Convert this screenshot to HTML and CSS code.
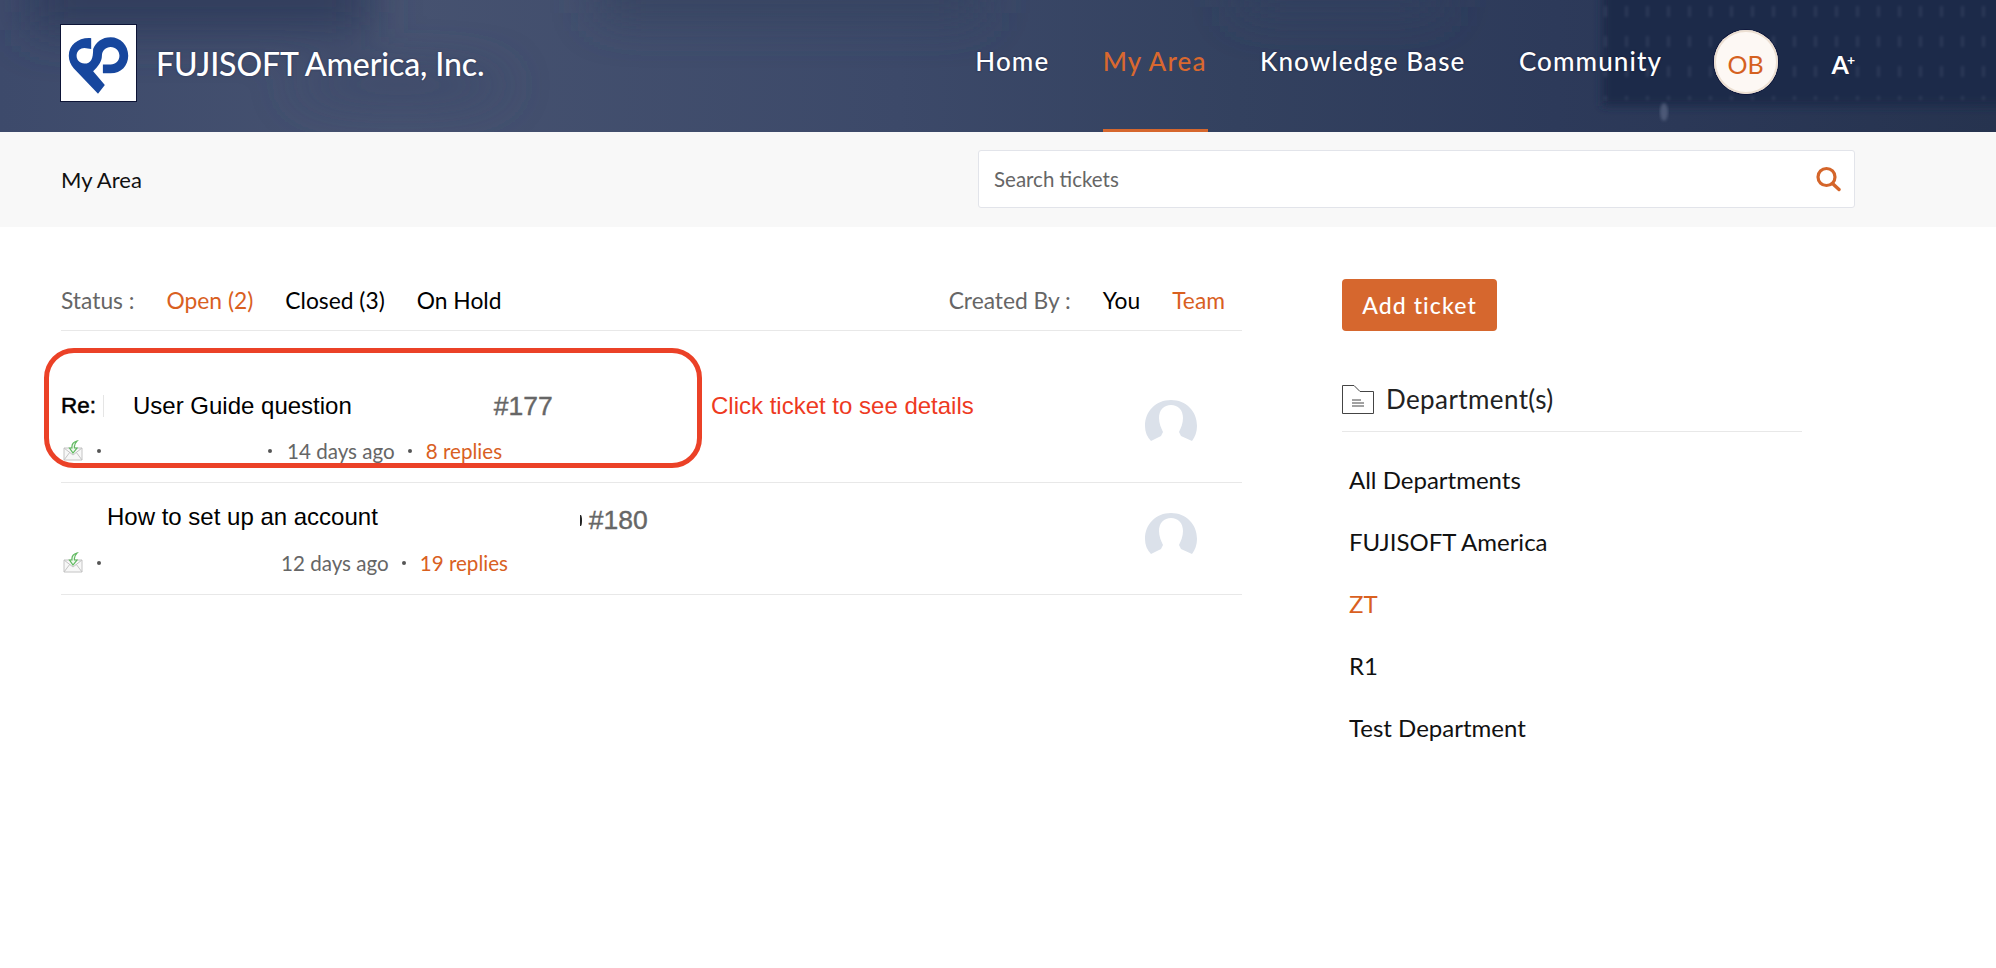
FILE: index.html
```html
<!DOCTYPE html>
<html lang="en">
<head>
<meta charset="utf-8">
<title>FUJISOFT America, Inc.</title>
<link rel="stylesheet" href="styles.css">
</head>
<body>
<header class="topbar">
  <svg class="topbar-bg" viewBox="0 0 1996 132" preserveAspectRatio="none" aria-hidden="true">
    <defs>
      <linearGradient id="bgGrad" x1="0" x2="1" y1="0" y2="0">
        <stop offset="0" stop-color="#3d4a6b"/>
        <stop offset="0.2" stop-color="#465270"/>
        <stop offset="0.45" stop-color="#3c4969"/>
        <stop offset="0.62" stop-color="#33415f"/>
        <stop offset="0.78" stop-color="#2d3a5a"/>
        <stop offset="1" stop-color="#26334f"/>
      </linearGradient>
      <filter id="blur18" x="-20%" y="-100%" width="140%" height="300%"><feGaussianBlur stdDeviation="24"/></filter>
      <filter id="blur4" x="-5%" y="-20%" width="110%" height="140%"><feGaussianBlur stdDeviation="4"/></filter>
      <filter id="blur1"><feGaussianBlur stdDeviation="1.500"/></filter>
      <pattern id="chip" width="21" height="30" patternUnits="userSpaceOnUse">
        <rect x="8" y="6" width="3" height="11" fill="#67738f"/>
      </pattern>
    </defs>
    <rect width="1996" height="132" fill="url(#bgGrad)"/>
    <g filter="url(#blur18)">
      <rect x="30" y="-30" width="340" height="60" fill="#2f3b5a"/>
      <rect x="600" y="-30" width="380" height="45" fill="#36425f"/>
      <rect x="1240" y="-30" width="200" height="40" fill="#33405f"/>
      <ellipse cx="400" cy="85" rx="110" ry="14" fill="#3a4768"/>
    </g>
    <rect x="1602" y="-10" width="420" height="116" fill="#1e2a49" filter="url(#blur4)"/>
    <rect x="1600" y="0" width="396" height="100" fill="url(#chip)" filter="url(#blur1)" opacity="0.22"/>
    <ellipse cx="1664" cy="112" rx="4" ry="9" fill="#5c6885" filter="url(#blur1)" opacity="0.7"/>
  </svg>
  <a class="brand" href="#">
    <span class="logo">
      <svg viewBox="0 0 77 77" width="75" height="76" aria-hidden="true">
        <path d="M31 13 C18 12 8 20 8 31 C8 36 10 40 13 44 L38 70 L45 61 L33 47 C38 42 42 37 42 31 C42 26 46 22 51 22 C56 22 60 26 60 31 C60 36 56 40 51 40 L43 40 L43 49 L51 49 C62 49 69 41 69 31 C69 20 61 12 51 12 C42 12 36 17 33 24 C33 34 31 39 24 39 C19 39 16 35 16 31 C16 26 20 23 24 23 L31 24 Z" fill="#17479e"/>
      </svg>
    </span>
    <span class="brand-name">FUJISOFT America, Inc.</span>
  </a>
  <nav class="nav">
    <a class="nav-link" href="#">Home</a>
    <a class="nav-link is-active" href="#">My Area</a>
    <a class="nav-link" href="#">Knowledge Base</a>
    <a class="nav-link" href="#">Community</a>
    <span class="avatar">OB</span>
    <span class="font-size">A<sup>+</sup></span>
  </nav>
</header>

<div class="subbar">
  <span class="crumb">My Area</span>
  <label class="search">
    <span class="search-text">Search tickets</span>
    <svg class="search-icon" viewBox="0 0 26 26" width="26" height="26" aria-hidden="true">
      <circle cx="11.500" cy="11" r="8.500" fill="none" stroke="#d4652a" stroke-width="3.200"/>
      <path d="M17.500 17.500 L24 23.500" stroke="#d4652a" stroke-width="3.400" stroke-linecap="round"/>
    </svg>
  </label>
</div>

<main class="content">
  <section class="tickets">
    <div class="filters">
      <div class="filter-group">
        <span class="filter-label">Status :</span>
        <a class="filter is-on" href="#">Open (2)</a>
        <a class="filter" href="#">Closed (3)</a>
        <a class="filter" href="#">On Hold</a>
      </div>
      <div class="filter-group">
        <span class="filter-label">Created By :</span>
        <a class="filter" href="#">You</a>
        <a class="filter is-on" href="#">Team</a>
      </div>
    </div>

    <article class="ticket ticket-first">
      <div class="ticket-main">
        <div class="ticket-title">
          <span class="re">Re:</span><span class="redact-edge"></span>
          <span class="subject subject-a">User Guide question</span>
          <span class="num num-a">#177</span>
        </div>
        <div class="ticket-meta">
          <svg class="mail" viewBox="0 0 22 22" width="22" height="22" aria-hidden="true">
            <path d="M2 8 L2 20 L20 20 L20 8 Z" fill="#f7f7f7" stroke="#c4c4c4" stroke-width="1"/>
            <path d="M2 8 L11 15 L20 8 M2 20 L8 12 M20 20 L14 12" fill="none" stroke="#c4c4c4" stroke-width="1"/>
            <path d="M15 1 C11 2 9.500 4 10 8 L7.500 8 L11 13 L15 8 L12.500 8 C12 5 13 3 15 1 Z" fill="#eef9ed" stroke="#5fb85f" stroke-width="1.200"/>
          </svg>
          <span class="dot dot-lead"></span>
          <span class="gap gap-a"></span>
          <span class="dot"></span>
          <span class="ago">14 days ago</span>
          <span class="dot"></span>
          <a class="replies" href="#">8 replies</a>
        </div>
      </div>
      <svg class="person" viewBox="0 0 52 42" width="52" height="42" aria-hidden="true">
        <path d="M26 0 C41 0 52 11 52 26 C52 32 50 37 47 41 L36 36 L34 32 C36 28 38 23 38 18 C38 10 33 5 26 5 C19 5 14 10 14 18 C14 23 16 28 18 32 L16 36 L6 41 C2 37 0 32 0 26 C0 11 11 0 26 0 Z" fill="#dbe1ea"/>
      </svg>
      <div class="callout"></div>
      <span class="callout-text">Click ticket to see details</span>
    </article>

    <article class="ticket ticket-second">
      <div class="ticket-main">
        <div class="ticket-title">
          <span class="subject subject-b">How to set up an account</span>
          <span class="paren-edge"></span>
          <span class="num num-b">#180</span>
        </div>
        <div class="ticket-meta">
          <svg class="mail" viewBox="0 0 22 22" width="22" height="22" aria-hidden="true">
            <path d="M2 8 L2 20 L20 20 L20 8 Z" fill="#f7f7f7" stroke="#c4c4c4" stroke-width="1"/>
            <path d="M2 8 L11 15 L20 8 M2 20 L8 12 M20 20 L14 12" fill="none" stroke="#c4c4c4" stroke-width="1"/>
            <path d="M15 1 C11 2 9.500 4 10 8 L7.500 8 L11 13 L15 8 L12.500 8 C12 5 13 3 15 1 Z" fill="#eef9ed" stroke="#5fb85f" stroke-width="1.200"/>
          </svg>
          <span class="dot dot-lead"></span>
          <span class="gap gap-b"></span>
          <span class="ago">12 days ago</span>
          <span class="dot"></span>
          <a class="replies" href="#">19 replies</a>
        </div>
      </div>
      <svg class="person" viewBox="0 0 52 42" width="52" height="42" aria-hidden="true">
        <path d="M26 0 C41 0 52 11 52 26 C52 32 50 37 47 41 L36 36 L34 32 C36 28 38 23 38 18 C38 10 33 5 26 5 C19 5 14 10 14 18 C14 23 16 28 18 32 L16 36 L6 41 C2 37 0 32 0 26 C0 11 11 0 26 0 Z" fill="#dbe1ea"/>
      </svg>
    </article>
  </section>

  <aside class="side">
    <a class="add-btn" href="#">Add ticket</a>
    <h2 class="side-title">
      <svg viewBox="0 0 32 29" width="32" height="29" aria-hidden="true">
        <path d="M.5 28.500 V.5 H12 L18 6.500 H31.500 V28.500 Z" fill="#fff" stroke="#444" stroke-width="1"/>
        <path d="M10 15 H19 M10 18 H22 M10 21 H22" stroke="#444" stroke-width="1"/>
      </svg>
      Department(s)
    </h2>
    <ul class="dept-list">
      <li>All Departments</li>
      <li>FUJISOFT America</li>
      <li class="is-on">ZT</li>
      <li>R1</li>
      <li>Test Department</li>
    </ul>
  </aside>
</main>
</body>
</html>
```
FILE: styles.css
```css
* { box-sizing: border-box; }
html, body { margin: 0; padding: 0; background: #fff; }
body { font-family: Lato, "Open Sans", sans-serif; color: #000; height: 968px; overflow: hidden; }
a { color: inherit; text-decoration: none; }

.topbar {
  position: relative;
  height: 132px;
  display: flex;
  align-items: center;
  justify-content: space-between;
  padding: 0 141px 0 60px;
  overflow: hidden;
  background: #37456a;
}
.topbar-bg { position: absolute; inset: 0; width: 100%; height: 100%; }
.brand { position: relative; display: flex; align-items: center; gap: 19px; margin-top: -6px; }
.logo {
  width: 77px; height: 78px;
  background: #fff;
  border: 1px solid #0d1436;
  display: flex;
  align-items: center;
  justify-content: center;
}
.brand-name {
  color: #fff;
  font-size: 32px;
  font-weight: 500;
  letter-spacing: -0.1px;
  text-shadow: 0 0 2px rgba(10, 15, 50, .5);
}
.nav { position: relative; display: flex; align-items: center; height: 132px; }
.nav-link {
  position: relative;
  display: block;
  color: #fff;
  font-size: 26px;
  font-weight: 500;
  letter-spacing: 1.1px;
  margin-right: 53.500px;
  height: 132px;
  line-height: 122px;
  text-shadow: 0 0 2px rgba(10, 15, 50, .7);
}
.nav-link.is-active { color: #d9682f; text-shadow: none; }
.nav-link.is-active::after {
  content: "";
  position: absolute;
  left: 0; right: -2px; bottom: 0;
  height: 3px;
  background: #d6672d;
}
.avatar {
  width: 64px; height: 64px;
  margin: 0 54px 9px -2px;
  border-radius: 50%;
  background: #fdf8f4;
  box-shadow: inset 0 0 0 2px #ecdfd2, 0 0 0 1px #10183c;
  color: #d5611f;
  font-size: 25px;
  display: flex;
  align-items: center;
  justify-content: center;
  padding-top: 4px;
}
.font-size {
  color: #fff;
  font-size: 25px;
  font-weight: 700;
  position: relative;
  top: -2px;
  text-shadow: 0 0 2px rgba(10, 15, 50, .7);
}
.font-size sup { font-size: 14px; vertical-align: 9px; line-height: 0; margin-left: -2px; }

.subbar {
  height: 95px;
  background: #f8f8f8;
  display: flex;
  align-items: center;
  justify-content: space-between;
  padding: 0 141px 0 61px;
}
.crumb { font-size: 22px; color: #111; }
.search {
  width: 877px;
  height: 58px;
  margin-top: -2px;
  background: #fff;
  border: 1px solid #e2e4ea;
  border-radius: 3px;
  display: flex;
  align-items: center;
  justify-content: space-between;
  padding: 0 13px 0 15px;
}
.search-text { font-size: 20.500px; color: #666; }

.content { display: flex; padding: 0 0 0 61px; }
.tickets { width: 1181px; flex: none; position: relative; }
.filters {
  height: 104px;
  padding-top: 57px;
  display: flex;
  justify-content: space-between;
  align-items: flex-start;
  border-bottom: 1px solid #e8e8e8;
  font-size: 22.800px;
  line-height: 32px;
  padding-right: 17px;
}
.filter-group { display: flex; }
.filter-label { color: #666; margin-right: 32px; }
.filter-group .filter { margin-right: 32px; }
.filter-group .filter:last-child { margin-right: 0; }
.filter.is-on { color: #d9601f; }

.ticket { position: relative; border-bottom: 1px solid #e8e8e8; }
.ticket-first { height: 152px; }
.ticket-second { height: 112px; }
.ticket-main { position: absolute; left: 0; top: 0; width: 100%; }
.ticket-title { position: relative; font-family: "Liberation Sans", Arial, sans-serif; font-size: 24px; }
.ticket-first .ticket-title { margin-top: 56px; height: 38px; display: flex; align-items: center; }
.ticket-second .ticket-title { margin-top: 15px; height: 44px; display: flex; align-items: center; }
.re { font-size: 22.500px; -webkit-text-stroke: .5px #000; }
.redact-edge { width: 1px; height: 22px; background: #e5e5e5; margin-left: 7px; }
.subject-a { margin-left: 29px; }
.subject-b { margin-left: 46px; position: relative; top: -3px; }
.num { color: #666; -webkit-text-stroke: .4px #666; }
.num-a { margin-left: 142px; font-size: 26.500px; }
.num-b { font-size: 26.500px; margin-left: 7px; }
.paren-edge {
  width: 3px;
  height: 11px;
  margin-left: 201px;
  border-right: 2px solid #222;
  border-radius: 0 50% 50% 0 / 0 50% 50% 0;
}

.ticket-meta {
  position: absolute;
  left: 1px;
  display: flex;
  align-items: center;
  color: #666;
  font-size: 20.600px;
  height: 26px;
}
.ticket-first .ticket-meta { top: 107px; }
.ticket-second .ticket-meta { top: 67px; }
.mail { flex: none; margin-right: 13px; }
.dot { width: 4px; height: 4px; border-radius: 50%; background: #555; margin: 0 15px 0 0; flex: none; }
.dot-lead { margin-right: 0; }
.gap-a { width: 167px; }
.gap-b { width: 180px; }
.ago + .dot { margin-left: 13px; margin-right: 14px; }
.replies { color: #d9601f; }
.person { position: absolute; right: 45px; }
.ticket-first .person { top: 69px; }
.ticket-second .person { top: 30px; }
.callout {
  position: absolute;
  left: -17px; top: 17px;
  width: 658px; height: 120px;
  border: 5px solid #eb4127;
  border-radius: 30px;
  pointer-events: none;
}
.callout-text {
  position: absolute;
  left: 650px; top: 61px;
  font-family: "Liberation Sans", Arial, sans-serif;
  font-size: 24px;
  color: #ee3a1f;
  white-space: nowrap;
}

.side { margin-left: 100px; width: 460px; }
.add-btn {
  display: inline-block;
  margin-top: 52px;
  width: 155px; height: 52px;
  line-height: 53px;
  text-align: center;
  background: #d6672e;
  border-radius: 4px;
  color: #fff;
  font-size: 23px;
  font-weight: 500;
  letter-spacing: 1.1px;
}
.side-title {
  margin: 53px 0 0;
  height: 48px;
  padding-bottom: 17px;
  display: flex;
  align-items: center;
  gap: 12px;
  font-size: 26px;
  font-weight: 400;
  color: #222;
  border-bottom: 1px solid #e8e8e8;
  letter-spacing: .4px;
}
.dept-list { list-style: none; margin: 17px 0 0; padding: 0 0 0 7px; font-size: 24px; }
.dept-list li { height: 62px; line-height: 61px; color: #111; }
.dept-list li.is-on { color: #d9601f; }
```
